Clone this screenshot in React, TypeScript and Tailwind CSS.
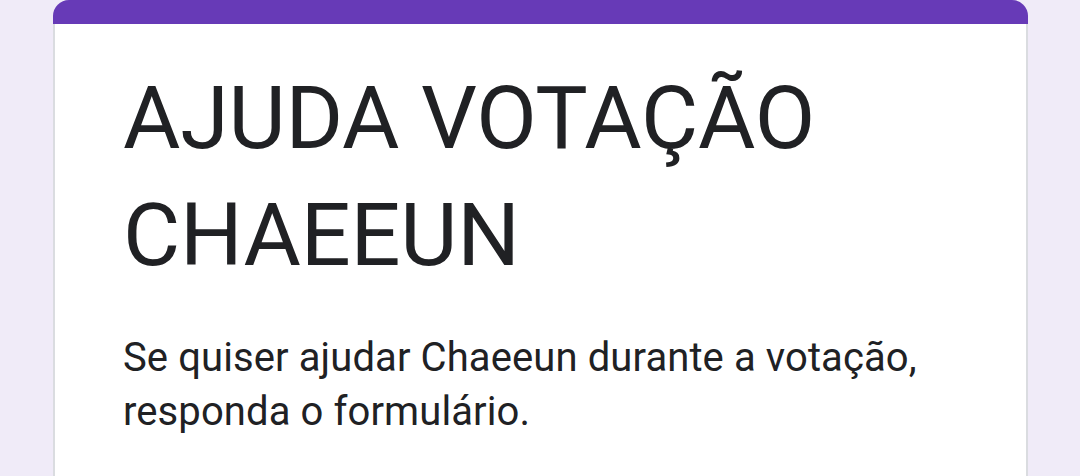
export default function App() {
  return (
    <div className="min-h-screen bg-[#f0ebf8] pl-[53px] pr-[52px] overflow-hidden" style={{ height: 476 }}>
      <div className="rounded-t-[16px] overflow-hidden w-[975px]">
        {/* accent bar */}
        <div className="h-[24px] bg-[#673ab7]" />
        <div className="bg-white border-x-2 border-[#dadce0] h-[460px] pl-[68px] pr-[40px] pt-[35px] font-['Roboto',sans-serif] text-[#202124]">
          <h1 className="text-[88px] leading-[117px] font-normal tracking-[-0.2px]">AJUDA VOTAÇÃO CHAEEUN</h1>
          <p className="mt-[38px] text-[40px] leading-[54px] tracking-[0.1px]">
            Se quiser ajudar Chaeeun durante a votação,
            <br />
            responda o formulário.
          </p>
        </div>
      </div>
    </div>
  );
}
